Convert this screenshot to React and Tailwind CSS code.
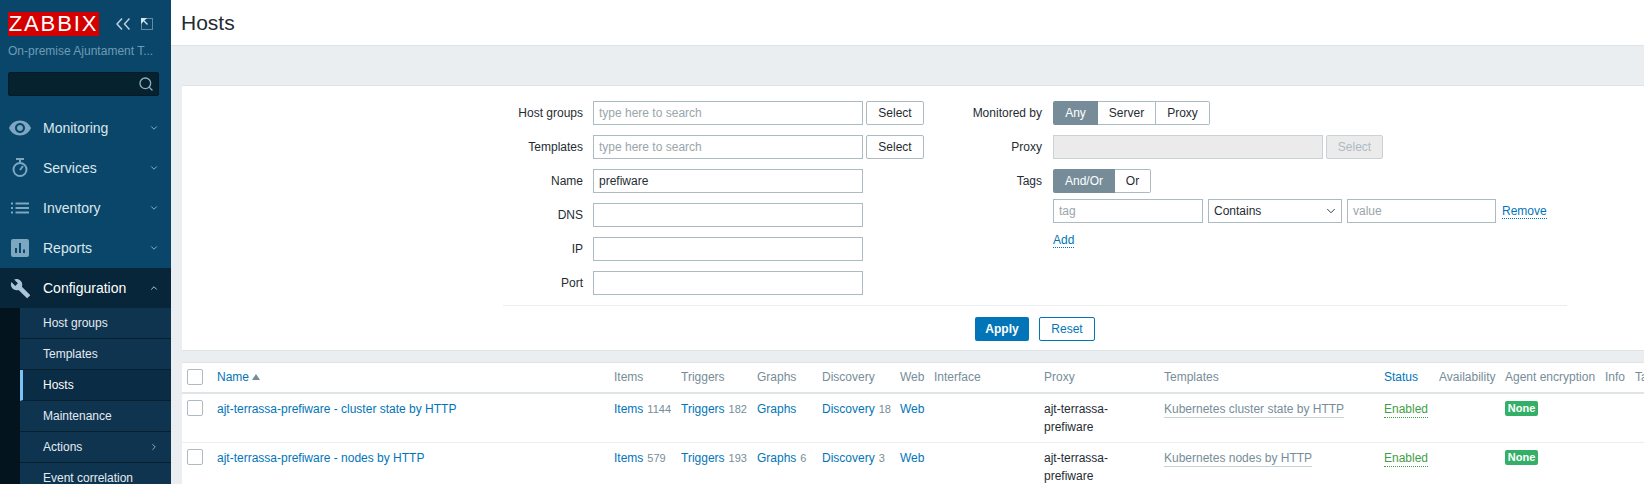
import React from "react";
import { ChevronDown, ChevronUp, ChevronRight, Search } from "lucide-react";
import { MdVisibility, MdBuild } from "react-icons/md";

const iconColor = "#7da6c0";

function StopwatchIcon() {
  return (
    <svg width="18" height="20" viewBox="0 0 18 20" fill="none" className="ml-[3px]">
      <path d="M5 1h8" stroke={iconColor} strokeWidth="2" />
      <path d="M9 1v3" stroke={iconColor} strokeWidth="2" />
      <circle cx="9" cy="11.5" r="6.5" stroke={iconColor} strokeWidth="2" />
      <path d="M9 12l3-4" stroke={iconColor} strokeWidth="2" />
    </svg>
  );
}
function ListIcon() {
  return (
    <svg width="18" height="12" viewBox="0 0 18 12" fill={iconColor} className="ml-[3px]">
      <rect x="0" y="0.5" width="2" height="2" />
      <rect x="0" y="5" width="2" height="2" />
      <rect x="0" y="9.5" width="2" height="2" />
      <rect x="4.5" y="0.5" width="13.5" height="2" />
      <rect x="4.5" y="5" width="13.5" height="2" />
      <rect x="4.5" y="9.5" width="13.5" height="2" />
    </svg>
  );
}
function ReportsIcon() {
  return (
    <svg width="18" height="18" viewBox="0 0 18 18" className="ml-[3px]">
      <rect width="18" height="18" rx="2" fill={iconColor} />
      <rect x="4" y="9" width="2" height="5" fill="#0a466a" />
      <rect x="8" y="4" width="2" height="10" fill="#0a466a" />
      <rect x="12" y="10.5" width="2" height="3.5" fill="#0a466a" />
    </svg>
  );
}
function EyeIcon() {
  return <MdVisibility size={24} style={{ color: iconColor }} />;
}

const menu = [
  { label: "Monitoring", Icon: EyeIcon },
  { label: "Services", Icon: StopwatchIcon },
  { label: "Inventory", Icon: ListIcon },
  { label: "Reports", Icon: ReportsIcon },
];
const sub = ["Host groups", "Templates", "Hosts", "Maintenance", "Actions", "Event correlation"];

function Sidebar() {
  return (
    <aside className="w-[171px] h-[484px] shrink-0 overflow-hidden bg-[#0a466a] flex flex-col">
      <div className="flex items-center pl-[8px] pt-[12px] shrink-0">
        <div className="w-[91px] h-[24px] bg-[#d40000] text-white text-[22px] leading-[24px] tracking-[1.9px] text-center overflow-hidden">ZABBIX</div>
        <svg className="ml-[17px]" width="14" height="12" viewBox="0 0 14 12" fill="none" stroke="#bcd0dc" strokeWidth="1.5">
          <path d="M6 0.5L1 6l5 5.5" />
          <path d="M13.5 0.5L8.5 6l5 5.5" />
        </svg>
        <svg className="ml-[11px]" width="12" height="12" viewBox="0 0 12 12" fill="none">
          <rect x="0.5" y="0.5" width="11" height="11" stroke="#bcd0dc" strokeDasharray="1 1" />
          <path d="M0 0h6L0 6z" fill="#dbe6ec" />
          <path d="M3 3l3.5 3.5" stroke="#dbe6ec" strokeWidth="1.3" />
        </svg>
      </div>
      <div className="pl-[8px] mt-[8px] w-[159px] shrink-0 text-[12px] leading-[14px] text-[#6f9bb5] truncate">On-premise Ajuntament T...</div>
      <div className="ml-[8px] mt-[14px] w-[151px] h-[24px] shrink-0 bg-[#06222f] border border-[#041a26] rounded-[2px] flex items-center justify-end pr-[4px]">
        <Search size={16} strokeWidth={2} className="text-[#8fb0c4]" />
      </div>
      <nav className="mt-[12px] shrink-0">
        {menu.map(({ label, Icon }) => (
          <div key={label} className="h-[40px] flex items-center text-[14px] text-[#dce6ec]">
            <div className="w-[43px] pl-[8px] shrink-0"><Icon /></div>
            <span className="flex-1">{label}</span>
            <ChevronDown size={10} strokeWidth={2} className="mr-[12px] text-[#a9c2d1]" />
          </div>
        ))}
        <div className="h-[40px] flex items-center text-[14px] text-white bg-[#07263a]">
          <div className="w-[43px] pl-[10px] shrink-0"><MdBuild size={21} className="text-[#a9c6d8]" /></div>
          <span className="flex-1">Configuration</span>
          <ChevronUp size={10} strokeWidth={2} className="mr-[12px] text-[#dce6ec]" />
        </div>
        <div className="bg-[#04141e] pl-[20px]">
          {sub.map((s) => (
            <div
              key={s}
              className={`h-[31px] flex items-center text-[12px] border-b border-[#07202f] ${s === "Hosts" ? "bg-[#0a2c44] border-l-[3px] border-l-[#7cc3f5] pl-[20px] text-white" : "bg-[#0f3450] pl-[23px] text-[#e3ebf0]"}`}
            >
              <span className="flex-1">{s}</span>
              {s === "Actions" && <ChevronRight size={10} strokeWidth={2} className="mr-[12px] text-[#a9c2d1]" />}
            </div>
          ))}
        </div>
      </nav>
    </aside>
  );
}

const field = "h-[24px] bg-white border border-[#acbbc2] px-[5px] text-[12px] flex items-center";
const btn = "h-[24px] bg-white border border-[#acbbc2] rounded-[2px] text-[12px] text-[#1f2c33] flex items-center justify-center";

function Row({ label, width = "w-[80px]", gap = "ml-[10px]", children }) {
  return (
    <div className="flex h-[24px] items-center">
      <div className={`${width} shrink-0 text-right text-[12px] text-[#1f2c33]`}>{label}</div>
      <div className={`${gap} flex items-center`}>{children}</div>
    </div>
  );
}

function Seg({ items }) {
  return (
    <div className="flex h-[24px]">
      {items.map(([t, w, active], i) => (
        <div
          key={t}
          style={{ width: w }}
          className={`flex items-center justify-center text-[12px] ${active ? "bg-[#768d99] text-white rounded-l-[2px]" : "bg-white text-[#1f2c33] border-y border-r border-[#acbbc2]"} ${i === items.length - 1 ? "rounded-r-[2px]" : ""}`}
        >
          {t}
        </div>
      ))}
    </div>
  );
}

function Filter() {
  return (
    <section className="mt-[39px] h-[266px] bg-white border-y border-[#dfe4e7] shrink-0">
      <div className="ml-[321px] w-[1064px] pt-[15px]">
        <div className="flex h-[204px]">
          <div className="w-[421px] shrink-0 flex flex-col gap-[10px]">
            <Row label="Host groups">
              <div className={`${field} w-[270px] text-[#9aa5ab]`}>type here to search</div>
              <div className={`${btn} w-[58px] ml-[3px]`}>Select</div>
            </Row>
            <Row label="Templates">
              <div className={`${field} w-[270px] text-[#9aa5ab]`}>type here to search</div>
              <div className={`${btn} w-[58px] ml-[3px]`}>Select</div>
            </Row>
            <Row label="Name"><div className={`${field} w-[270px] text-[#1f2c33]`}>prefiware</div></Row>
            <Row label="DNS"><div className={`${field} w-[270px]`} /></Row>
            <Row label="IP"><div className={`${field} w-[270px]`} /></Row>
            <Row label="Port"><div className={`${field} w-[270px]`} /></Row>
          </div>
          <div className="flex flex-col gap-[10px]">
            <Row label="Monitored by" width="w-[118px]" gap="ml-[11px]">
              <Seg items={[["Any", 45, true], ["Server", 58], ["Proxy", 54]]} />
            </Row>
            <Row label="Proxy" width="w-[118px]" gap="ml-[11px]">
              <div className="h-[24px] w-[270px] bg-[#ebebeb] border border-[#c9d2d7]" />
              <div className="h-[24px] w-[57px] ml-[3px] bg-[#ebebeb] border border-[#c9d2d7] rounded-[2px] text-[12px] text-[#acbbc2] flex items-center justify-center">Select</div>
            </Row>
            <Row label="Tags" width="w-[118px]" gap="ml-[11px]">
              <Seg items={[["And/Or", 62, true], ["Or", 36]]} />
            </Row>
            <div className="ml-[129px] -mt-[4px] flex items-center h-[24px]">
              <div className={`${field} w-[150px] text-[#9aa5ab]`}>tag</div>
              <div className={`${field} w-[134px] ml-[5px] text-[#1f2c33] justify-between pr-[3px]`}>
                <span>Contains</span>
                <ChevronDown size={14} strokeWidth={1.5} className="text-[#1f2c33]" />
              </div>
              <div className={`${field} w-[149px] ml-[5px] text-[#9aa5ab]`}>value</div>
              <span className="ml-[6px] text-[12px] leading-[14px] text-[#0275b8] border-b border-dotted border-[#0275b8]">Remove</span>
            </div>
            <div className="ml-[129px] -mt-[2px]">
              <span className="text-[12px] leading-[14px] inline-block text-[#0275b8] border-b border-dotted border-[#0275b8]">Add</span>
            </div>
          </div>
        </div>
        <div className="border-t border-[#ebeef0] pt-[11px] flex justify-center gap-[10px]">
          <div className="w-[54px] h-[24px] bg-[#0275b8] rounded-[2px] text-white text-[12px] font-bold flex items-center justify-center">Apply</div>
          <div className="w-[56px] h-[24px] bg-white border border-[#0275b8] rounded-[2px] text-[#0275b8] text-[12px] flex items-center justify-center">Reset</div>
        </div>
      </div>
    </section>
  );
}

const cols = ["w-[30px]", "w-[397px]", "w-[67px]", "w-[76px]", "w-[65px]", "w-[78px]", "w-[34px]", "w-[110px]", "w-[120px]", "w-[220px]", "w-[55px]", "w-[66px]", "w-[100px]", "w-[30px]", "w-[60px]"];
const heads = ["Items", "Triggers", "Graphs", "Discovery", "Web", "Interface", "Proxy", "Templates"];

function Box() {
  return <div className="w-[16px] h-[16px] border border-[#acbbc2] rounded-[2px] bg-white ml-[5px]" />;
}
function Count({ t, n }) {
  return (
    <>
      <span className="text-[#0275b8]">{t}</span>
      {n && <span className="text-[#768d99] text-[11px] ml-[4px]">{n}</span>}
    </>
  );
}
function HostRow({ name, items, triggers, graphs, discovery, tpl }) {
  const td = "align-top px-[5px] pt-[6px] pb-[6px] leading-[18px] whitespace-nowrap";
  return (
    <tr className="border-b border-[#ebeef0]">
      <td className="align-top pt-[6px]"><Box /></td>
      <td className={`${td} text-[#0275b8]`}>{name}</td>
      <td className={td}><Count t="Items" n={items} /></td>
      <td className={td}><Count t="Triggers" n={triggers} /></td>
      <td className={td}><Count t="Graphs" n={graphs} /></td>
      <td className={td}><Count t="Discovery" n={discovery} /></td>
      <td className={`${td} text-[#0275b8]`}>Web</td>
      <td className={td} />
      <td className={`${td} text-[#1f2c33]`}>ajt-terrassa-<br />prefiware</td>
      <td className={td}><span className="text-[#768d99] border-b border-[#c9d2d7] inline-block leading-[15px]">{tpl}</span></td>
      <td className={td}><span className="text-[#429e47] border-b border-dotted border-[#429e47] inline-block leading-[15px]">Enabled</span></td>
      <td className={td} />
      <td className={td}><span className="inline-block h-[15px] w-[33px] leading-[15px] mt-[1px] text-center rounded-[2px] bg-[#34af67] text-white text-[11px] font-bold align-top">None</span></td>
      <td className={td} />
      <td className={td} />
    </tr>
  );
}

function HostTable() {
  const th = "font-normal text-left px-[5px] pb-[2px] whitespace-nowrap";
  return (
    <section className="mt-[11px] flex-1 bg-white border-t border-[#dfe4e7] overflow-hidden">
      <table className="table-fixed w-[1508px] border-collapse text-[12px]">
        <colgroup>{cols.map((c, i) => <col key={i} className={c} />)}</colgroup>
        <thead>
          <tr className="h-[30px] border-b-[2px] border-[#dfe4e7] text-[#768d99]">
            <th className="font-normal align-middle pb-[2px]"><Box /></th>
            <th className={`${th} text-[#0275b8]`}>
              Name
              <svg className="inline-block ml-[3px]" width="8" height="6" viewBox="0 0 8 6" fill="#768d99"><path d="M4 0l4 6H0z" /></svg>
            </th>
            {heads.map((h) => <th key={h} className={th}>{h}</th>)}
            <th className={`${th} text-[#0275b8]`}>Status</th>
            <th className={th}>Availability</th>
            <th className={th}>Agent encryption</th>
            <th className={th}>Info</th>
            <th className={th}>Tags</th>
          </tr>
        </thead>
        <tbody>
          <HostRow name="ajt-terrassa-prefiware - cluster state by HTTP" items="1144" triggers="182" discovery="18" tpl="Kubernetes cluster state by HTTP" />
          <HostRow name="ajt-terrassa-prefiware - nodes by HTTP" items="579" triggers="193" graphs="6" discovery="3" tpl="Kubernetes nodes by HTTP" />
        </tbody>
      </table>
    </section>
  );
}

export default function App() {
  return (
    <div className="flex w-[1644px] h-[484px] overflow-hidden bg-[#ebeef0] text-[12px]" style={{ fontFamily: '"Liberation Sans", Arial, sans-serif' }}>
      <Sidebar />
      <main className="flex-1 flex flex-col min-w-0 pl-[11px] relative">
        <header className="-ml-[11px] h-[46px] shrink-0 bg-white border-b border-[#dfe4e7] pl-[10px] flex items-center">
          <h1 className="text-[21px] leading-[24px] text-[#1f2c33] pt-[1px]">Hosts</h1>
        </header>
        <Filter />
        <HostTable />
      </main>
    </div>
  );
}
